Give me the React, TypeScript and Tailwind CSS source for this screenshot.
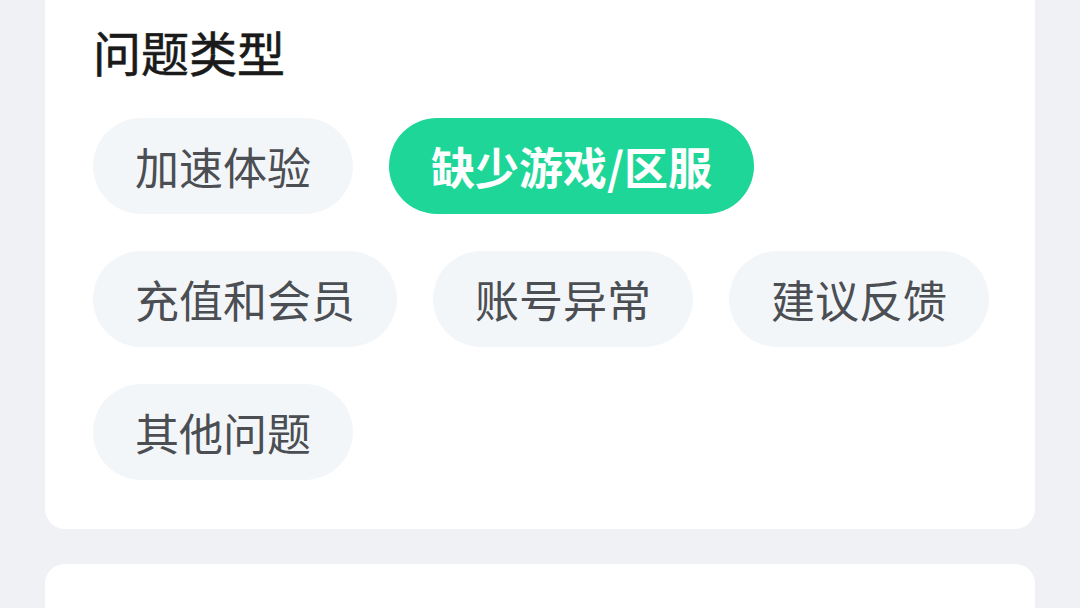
const types = ['加速体验', '缺少游戏/区服', '充值和会员', '账号异常', '建议反馈', '其他问题'];

export default function App() {
  const selected = '缺少游戏/区服';

  return (
    <div
      className="min-h-[608px] bg-[#eff1f4] px-[45px]"
      style={{ fontFamily: '"Noto Sans CJK SC", "Noto Sans", sans-serif' }}
    >
      <div className="rounded-b-[20px] bg-white pb-[49px] pl-12 pr-[40px] pt-[27px]">
        <h2 className="text-[48px] font-normal leading-[48px] text-[#1a1a1a] [-webkit-text-stroke:0.6px_#1a1a1a]">
          问题类型
        </h2>

        <div className="mt-[43px] flex flex-wrap gap-x-[36px] gap-y-[37px]">
          {types.map(t => (
            <button
              key={t}
              className={
                t === selected
                  ? 'h-[96px] rounded-full bg-[#1ed698] px-[42px] text-[44px] font-bold text-white'
                  : 'h-[96px] rounded-full bg-[#f3f6f9] px-[42px] text-[44px] text-[#4b4e53]'
              }
            >
              {t}
            </button>
          ))}
        </div>
      </div>

      <div className="mt-[35px] h-[60px] rounded-t-[20px] bg-white" />
    </div>
  );
}
